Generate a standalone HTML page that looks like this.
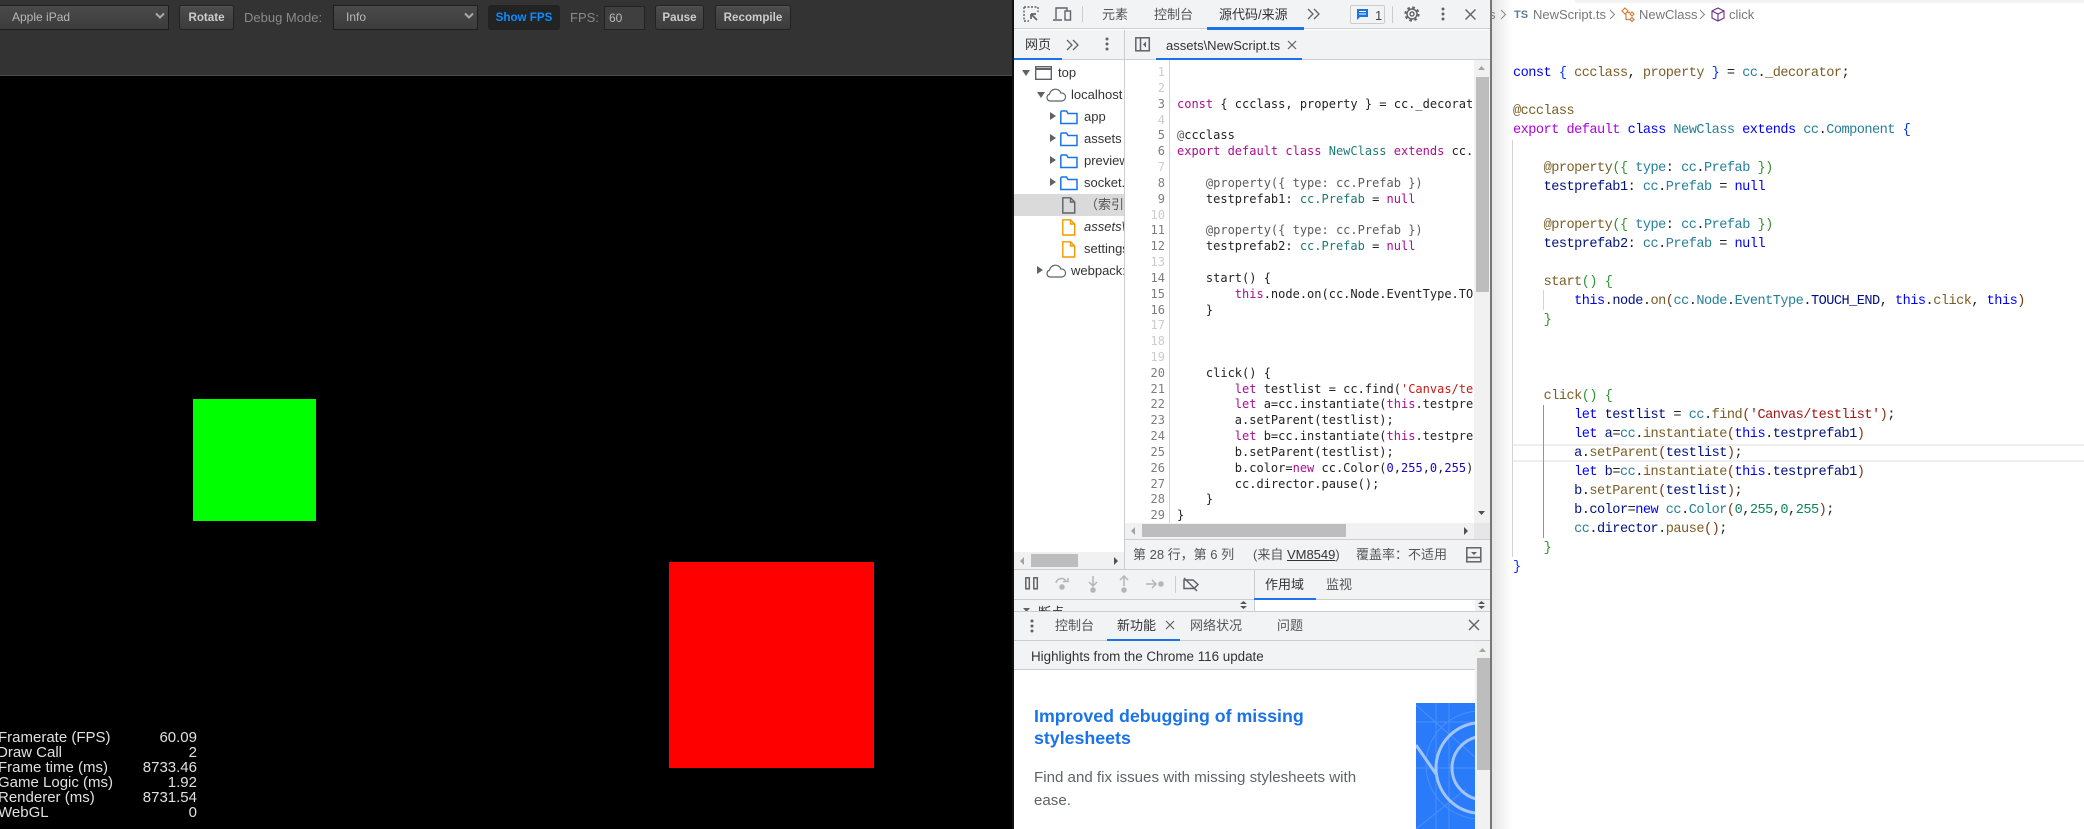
<!DOCTYPE html>
<html lang="zh"><head><meta charset="utf-8"><title>Debug</title>
<style>
*{box-sizing:border-box}
html,body{margin:0;padding:0;width:2084px;height:829px;overflow:hidden;background:#000}
body{font-family:"Liberation Sans","Noto Sans CJK SC",sans-serif;position:relative}
.a{position:absolute;white-space:pre}
.sel,.btn,.inp{position:absolute;top:5px;height:25px;font-size:12px;line-height:23px;color:#b8b8b8}
.sel{background:linear-gradient(#4a4a4a,#3c3c3c);border:1px solid #1e1e1e}
.btn{text-align:center;border:1px solid #222;border-radius:3px;background:linear-gradient(#4c4c4c,#3c3c3c);color:#ccc;font-weight:bold;font-size:11.6px;box-shadow:inset 0 1px 0 #565656}
.lbl{position:absolute;top:8px;font-size:13px;line-height:20px;color:#8a8a8a}
.st{position:absolute;font-size:15px;line-height:15px;color:#e0e0e0;filter:blur(.35px)}
.dt{position:absolute;font-size:13px;line-height:18px;color:#555;white-space:pre}
.tr{position:absolute;font-size:13px;line-height:18px;color:#333;white-space:pre;overflow:hidden}
.ln{position:absolute;left:1126px;width:39px;text-align:right;font:12px/16px "DejaVu Sans Mono",monospace;color:#7d7d7d;height:16px}
.ln.o{color:#ccc}
.c{position:absolute;left:1177px;width:297px;overflow:hidden;font:12px/16px "DejaVu Sans Mono",monospace;color:#222;white-space:pre;height:16px}
.k{color:#aa0d91}.t{color:#1c7a74}.n{color:#1c00cf}.s{color:#c41a16}.d{color:#5c5c5c}
.v{position:absolute;left:1513px;margin-top:1px;font:13.6px/19px "Liberation Mono",monospace;letter-spacing:-.52px;color:#222;white-space:pre}
.b{color:#0000ff}.p{color:#af00db}.g{color:#267f99}.f{color:#795e26}.x{color:#001080}.m{color:#098658}.r{color:#a31515}.h{color:#319331}.q{color:#0431fa}.y{color:#7b3814}
svg{position:absolute;overflow:visible}
</style></head><body>

<!-- Left: toolbar -->
<div class="a" style="left:0;top:0;width:1014px;height:75px;background:#333"></div>
<div class="a" style="left:0;top:75px;width:1014px;height:1px;background:#4a4a4a"></div>
<div class="sel" style="left:-4px;width:173px;padding-left:15px">Apple iPad</div>
<svg style="left:155px;top:12px" width="10" height="8"><path d="M1 1.5L5 5.5L9 1.5" fill="none" stroke="#aaa" stroke-width="2"/></svg>
<div class="btn" style="left:179px;width:55px">Rotate</div>
<div class="lbl" style="left:244px">Debug Mode:</div>
<div class="sel" style="left:333px;width:145px;padding-left:12px">Info</div>
<svg style="left:464px;top:12px" width="10" height="8"><path d="M1 1.5L5 5.5L9 1.5" fill="none" stroke="#aaa" stroke-width="2"/></svg>
<div class="btn" style="left:488px;width:72px;background:#232323;color:#0a8dff;box-shadow:none">Show FPS</div>
<div class="lbl" style="left:570px">FPS:</div>
<div class="inp" style="left:604px;width:41px;background:#3f3f3f;border:1px solid #222;padding-left:4px;top:6px;height:24px;line-height:22px">60</div>
<div class="btn" style="left:655px;width:49px">Pause</div>
<div class="btn" style="left:715px;width:76px">Recompile</div>

<!-- Canvas -->
<div class="a" style="left:193px;top:399px;width:123px;height:122px;background:#0f0"></div>
<div class="a" style="left:669px;top:562px;width:205px;height:206px;background:#f00"></div>
<div class="st" style="left:-2px;top:730px">Framerate (FPS)</div><div class="st" style="right:1887px;top:730px">60.09</div>
<div class="st" style="left:-3px;top:745px">Draw Call</div><div class="st" style="right:1887px;top:745px">2</div>
<div class="st" style="left:-2px;top:760px">Frame time (ms)</div><div class="st" style="right:1887px;top:760px">8733.46</div>
<div class="st" style="left:-2px;top:775px">Game Logic (ms)</div><div class="st" style="right:1887px;top:775px">1.92</div>
<div class="st" style="left:-2px;top:790px">Renderer (ms)</div><div class="st" style="right:1887px;top:790px">8731.54</div>
<div class="st" style="left:-2px;top:805px">WebGL</div><div class="st" style="right:1887px;top:805px">0</div>

<!-- DevTools -->
<div class="a" style="left:1012px;top:0;width:2px;height:829px;background:#111"></div>
<div class="a" style="left:1014px;top:0;width:477px;height:829px;background:#fff"></div>
<div class="a" style="left:1014px;top:0;width:477px;height:29px;background:#f1f3f4;border-bottom:1px solid #cacdd1"></div>
<svg style="left:1023px;top:6px" width="20" height="17" fill="none" stroke="#5f6368" stroke-width="1.4"><path d="M1 1h14M1 1v14M1 15h5M15 1v5" stroke-dasharray="2 1.5"/><path d="M8 8L14 14M8 8h5M8 8v5" stroke-width="1.7"/></svg>
<svg style="left:1053px;top:6px" width="20" height="16" fill="none" stroke="#5f6368" stroke-width="1.4"><path d="M3 13V2h11v3M0 14h9"/><rect x="12" y="5" width="5.5" height="9"/></svg>
<div class="a" style="left:1082px;top:6px;width:1px;height:16px;background:#ccc"></div>
<div class="dt" style="left:1102px;top:6px">元素</div>
<div class="dt" style="left:1154px;top:6px">控制台</div>
<div class="dt" style="left:1219px;top:6px;color:#333">源代码/来源</div>
<div class="a" style="left:1207px;top:27px;width:97px;height:3px;background:#1a73e8"></div>
<svg style="left:1307px;top:8px" width="14" height="12" fill="none" stroke="#5f6368" stroke-width="1.3"><path d="M1 1l5 5-5 5M7 1l5 5-5 5"/></svg>
<div class="a" style="left:1350px;top:5px;width:35px;height:19px;border:1px solid #ccc;border-radius:2px"></div>
<svg style="left:1357px;top:9px" width="13" height="11"><path d="M0 0h11v8H3L0 11z" fill="#1a73e8"/><path d="M2 2.5h7M2 5h7" stroke="#fff"/></svg>
<div class="dt" style="left:1375px;top:7px;color:#444">1</div>
<div class="a" style="left:1392px;top:6px;width:1px;height:17px;background:#ccc"></div>
<svg style="left:1404px;top:6px" width="16" height="16" fill="none" stroke="#5f6368"><circle cx="8" cy="8" r="5" stroke-width="1.4"/><circle cx="8" cy="8" r="2" stroke-width="1.4"/><circle cx="8" cy="8" r="6.6" stroke-width="2" stroke-dasharray="2.6 2.6"/></svg>
<svg style="left:1441px;top:7px" width="4" height="14" fill="#5f6368"><circle cx="2" cy="2" r="1.5"/><circle cx="2" cy="7" r="1.5"/><circle cx="2" cy="12" r="1.5"/></svg>
<svg style="left:1465px;top:9px" width="11" height="11" stroke="#5f6368" stroke-width="1.4"><path d="M.5.5l10 10M10.5.5l-10 10"/></svg>

<!-- row 2 -->
<div class="a" style="left:1014px;top:30px;width:477px;height:30px;background:#f1f3f4;border-bottom:1px solid #cacdd1"></div>
<div class="dt" style="left:1025px;top:36px;color:#333">网页</div>
<div class="a" style="left:1014px;top:58px;width:48px;height:2px;background:#1a73e8"></div>
<svg style="left:1066px;top:39px" width="14" height="12" fill="none" stroke="#5f6368" stroke-width="1.3"><path d="M1 1l5 5-5 5M7 1l5 5-5 5"/></svg>
<svg style="left:1105px;top:37px" width="4" height="14" fill="#5f6368"><circle cx="2" cy="2" r="1.5"/><circle cx="2" cy="7" r="1.5"/><circle cx="2" cy="12" r="1.5"/></svg>
<div class="a" style="left:1124px;top:30px;width:1px;height:539px;background:#cacdd1"></div>
<svg style="left:1135px;top:37px" width="16" height="15" fill="none" stroke="#5f6368" stroke-width="1.5"><rect x=".8" y=".8" width="13.5" height="13"/><path d="M5.5 1v13"/><path d="M11 4.5v6L8 7.5z" fill="#5f6368" stroke="none"/></svg>
<div class="dt" style="left:1166px;top:37px;color:#333">assets\NewScript.ts</div>
<svg style="left:1288px;top:41px" width="8" height="8" stroke="#5f6368" stroke-width="1.2"><path d="M0 0l8 8M8 0l-8 8"/></svg>
<div class="a" style="left:1156px;top:58px;width:146px;height:2px;background:#1a73e8"></div>

<!-- Tree -->
<div class="a" style="left:1014px;top:194px;width:110px;height:22px;background:#dadada"></div>
<svg style="left:1022px;top:70px" width="9" height="7"><path d="M0 0h8L4 6z" fill="#5f6368"/></svg>
<svg style="left:1035px;top:66px" width="18" height="15" fill="none" stroke="#5f6368" stroke-width="1.4"><rect x=".7" y=".7" width="15.6" height="12.6"/><path d="M1 3h15" stroke-width="2"/></svg>
<div class="tr" style="left:1058px;top:64px">top</div>
<svg style="left:1037px;top:92px" width="9" height="7"><path d="M0 0h8L4 6z" fill="#5f6368"/></svg>
<svg style="left:1046px;top:88px" width="21" height="14" fill="none" stroke="#5f6368" stroke-width="1.2"><path d="M5 13H4A3.5 3.5 0 0 1 3.5 6.2 6 6 0 0 1 15 5a4 4 0 0 1 1 8z"/></svg>
<div class="tr" style="left:1071px;top:86px;width:53px">localhost</div>

<svg style="left:1050px;top:112px" width="7" height="9"><path d="M0 0v8l6-4z" fill="#5f6368"/></svg>
<svg style="left:1060px;top:110px" width="19" height="15" fill="none" stroke="#1a73e8" stroke-width="1.5"><path d="M.8 2V13.5H17V3.5H8L6.5 1H1.5z"/></svg>
<div class="tr" style="left:1084px;top:108px">app</div>
<svg style="left:1050px;top:134px" width="7" height="9"><path d="M0 0v8l6-4z" fill="#5f6368"/></svg>
<svg style="left:1060px;top:132px" width="19" height="15" fill="none" stroke="#1a73e8" stroke-width="1.5"><path d="M.8 2V13.5H17V3.5H8L6.5 1H1.5z"/></svg>
<div class="tr" style="left:1084px;top:130px">assets</div>
<svg style="left:1050px;top:156px" width="7" height="9"><path d="M0 0v8l6-4z" fill="#5f6368"/></svg>
<svg style="left:1060px;top:154px" width="19" height="15" fill="none" stroke="#1a73e8" stroke-width="1.5"><path d="M.8 2V13.5H17V3.5H8L6.5 1H1.5z"/></svg>
<div class="tr" style="left:1084px;top:152px;width:40px">preview</div>
<svg style="left:1050px;top:178px" width="7" height="9"><path d="M0 0v8l6-4z" fill="#5f6368"/></svg>
<svg style="left:1060px;top:176px" width="19" height="15" fill="none" stroke="#1a73e8" stroke-width="1.5"><path d="M.8 2V13.5H17V3.5H8L6.5 1H1.5z"/></svg>
<div class="tr" style="left:1084px;top:174px;width:40px">socket.io</div>
<svg style="left:1062px;top:197px" width="14" height="17" fill="none" stroke="#5f6368" stroke-width="1.4"><path d="M.8.8H8.5L12.7 5V16H.8z"/><path d="M8.5 1v4h4"/></svg>
<div class="tr" style="left:1085px;top:196px;width:39px;color:#555">（索引）</div>
<svg style="left:1062px;top:219px" width="14" height="17" fill="none" stroke="#f29900" stroke-width="1.4"><path d="M.8.8H8.5L12.7 5V16H.8z"/><path d="M8.5 1v4h4"/></svg>
<div class="tr" style="left:1084px;top:218px;width:40px;font-style:italic">assets\NewScript.ts</div>
<svg style="left:1062px;top:241px" width="14" height="17" fill="none" stroke="#f29900" stroke-width="1.4"><path d="M.8.8H8.5L12.7 5V16H.8z"/><path d="M8.5 1v4h4"/></svg>
<div class="tr" style="left:1084px;top:240px;width:40px">settings.js</div>
<svg style="left:1037px;top:266px" width="7" height="9"><path d="M0 0v8l6-4z" fill="#5f6368"/></svg>
<svg style="left:1046px;top:264px" width="21" height="14" fill="none" stroke="#5f6368" stroke-width="1.2"><path d="M5 13H4A3.5 3.5 0 0 1 3.5 6.2 6 6 0 0 1 15 5a4 4 0 0 1 1 8z"/></svg>
<div class="tr" style="left:1071px;top:262px;width:53px">webpack://</div>

<div class="a" style="left:1014px;top:552px;width:110px;height:17px;background:#f1f1f1"></div>
<div class="a" style="left:1031px;top:554px;width:47px;height:13px;background:#bdbdbd"></div>
<svg style="left:1020px;top:557px" width="5" height="8"><path d="M4 0v8L0 4z" fill="#a3a3a3"/></svg>
<svg style="left:1114px;top:557px" width="5" height="8"><path d="M0 0v8l4-4z" fill="#505050"/></svg>

<!-- Source -->
<div class="a" style="left:1169px;top:60px;width:1px;height:463px;background:#d4d4d4"></div>
<div class="ln o" style="top:64px">1</div><div class="ln o" style="top:80px">2</div><div class="ln" style="top:96px">3</div><div class="ln o" style="top:112px">4</div><div class="ln" style="top:127px">5</div><div class="ln" style="top:143px">6</div><div class="ln o" style="top:159px">7</div><div class="ln" style="top:175px">8</div><div class="ln" style="top:191px">9</div><div class="ln o" style="top:207px">10</div><div class="ln" style="top:222px">11</div><div class="ln" style="top:238px">12</div><div class="ln o" style="top:254px">13</div><div class="ln" style="top:270px">14</div><div class="ln" style="top:286px">15</div><div class="ln" style="top:302px">16</div><div class="ln o" style="top:317px">17</div><div class="ln o" style="top:333px">18</div><div class="ln o" style="top:349px">19</div><div class="ln" style="top:365px">20</div><div class="ln" style="top:381px">21</div><div class="ln" style="top:396px">22</div><div class="ln" style="top:412px">23</div><div class="ln" style="top:428px">24</div><div class="ln" style="top:444px">25</div><div class="ln" style="top:460px">26</div><div class="ln" style="top:476px">27</div><div class="ln" style="top:491px">28</div><div class="ln" style="top:507px">29</div>

<div class="c" style="top:96px"><span class="k">const</span> { ccclass, property } = cc._decorator;</div>
<div class="c" style="top:127px"><span class="d">@</span>ccclass</div>
<div class="c" style="top:143px"><span class="k">export default class</span> <span class="t">NewClass</span> <span class="k">extends</span> cc.Component {</div>
<div class="c" style="top:175px">    <span class="d">@property({ type: cc.Prefab })</span></div>
<div class="c" style="top:191px">    testprefab1: <span class="t">cc.Prefab</span> = <span class="k">null</span></div>
<div class="c" style="top:222px">    <span class="d">@property({ type: cc.Prefab })</span></div>
<div class="c" style="top:238px">    testprefab2: <span class="t">cc.Prefab</span> = <span class="k">null</span></div>
<div class="c" style="top:270px">    start() {</div>
<div class="c" style="top:286px">        <span class="k">this</span>.node.on(cc.Node.EventType.TOUCH_END, <span class="k">this</span>.click, <span class="k">this</span>)</div>
<div class="c" style="top:302px">    }</div>
<div class="c" style="top:365px">    click() {</div>
<div class="c" style="top:381px">        <span class="k">let</span> testlist = cc.find(<span class="s">'Canvas/testlist'</span>);</div>
<div class="c" style="top:396px">        <span class="k">let</span> a=cc.instantiate(<span class="k">this</span>.testprefab1)</div>
<div class="c" style="top:412px">        a.setParent(testlist);</div>
<div class="c" style="top:428px">        <span class="k">let</span> b=cc.instantiate(<span class="k">this</span>.testprefab1)</div>
<div class="c" style="top:444px">        b.setParent(testlist);</div>
<div class="c" style="top:460px">        b.color=<span class="k">new</span> cc.Color(<span class="n">0</span>,<span class="n">255</span>,<span class="n">0</span>,<span class="n">255</span>);</div>
<div class="c" style="top:476px">        cc.director.pause();</div>
<div class="c" style="top:491px">    }</div>
<div class="c" style="top:507px">}</div>

<div class="a" style="left:1474px;top:60px;width:17px;height:463px;background:#f1f1f1"></div>
<div class="a" style="left:1476px;top:77px;width:13px;height:215px;background:#bdbdbd"></div>
<svg style="left:1478px;top:66px" width="8" height="5"><path d="M0 4h7L3.5 0z" fill="#a3a3a3"/></svg>
<svg style="left:1478px;top:511px" width="8" height="5"><path d="M0 0h7L3.5 4z" fill="#505050"/></svg>
<div class="a" style="left:1125px;top:523px;width:366px;height:16px;background:#f1f1f1"></div>
<div class="a" style="left:1142px;top:524px;width:204px;height:13px;background:#bdbdbd"></div>
<div class="a" style="left:1474px;top:523px;width:17px;height:16px;background:#e6e6e6"></div>
<svg style="left:1131px;top:527px" width="5" height="8"><path d="M4 0v8L0 4z" fill="#a3a3a3"/></svg>
<svg style="left:1464px;top:527px" width="5" height="8"><path d="M0 0v8l4-4z" fill="#505050"/></svg>

<!-- status -->
<div class="a" style="left:1125px;top:539px;width:366px;height:30px;background:#f1f3f4;border-top:1px solid #cacdd1"></div>
<div class="dt" style="left:1133px;top:546px">第 28 行，第 6 列</div>
<div class="dt" style="left:1253px;top:546px">(来自 <span style="text-decoration:underline;color:#333">VM8549</span>)</div>
<div class="dt" style="left:1356px;top:546px">覆盖率：不适用</div>
<svg style="left:1466px;top:547px" width="16" height="16" fill="none" stroke="#5f6368" stroke-width="1.5"><rect x=".8" y=".8" width="14" height="14"/><path d="M1 10.5h14"/><path d="M5 5h6L8 8z" fill="#5f6368" stroke="none"/></svg>

<!-- debugger -->
<div class="a" style="left:1014px;top:569px;width:477px;height:42px;background:#f1f3f4;border-top:1px solid #cacdd1"></div>
<div class="a" style="left:1014px;top:599px;width:477px;height:1px;background:#cacdd1"></div>
<div class="a" style="left:1254px;top:570px;width:1px;height:41px;background:#cacdd1"></div>
<svg style="left:1025px;top:577px" width="14" height="13" fill="none" stroke="#5f6368" stroke-width="1.5"><rect x=".8" y=".8" width="3.5" height="11"/><rect x="8.8" y=".8" width="3.5" height="11"/></svg>
<svg style="left:1055px;top:577px" width="16" height="14" fill="none" stroke="#b5b5b5" stroke-width="1.5"><path d="M1 6a5.5 5.5 0 0 1 10-2"/><path d="M8 4.5h5V1"/><circle cx="7" cy="10" r="2" fill="#b5b5b5"/></svg>
<svg style="left:1088px;top:576px" width="10" height="18" fill="none" stroke="#b5b5b5" stroke-width="1.5"><path d="M5 0v9M1 6l4 4 4-4"/><circle cx="5" cy="14" r="2" fill="#b5b5b5"/></svg>
<svg style="left:1119px;top:576px" width="10" height="18" fill="none" stroke="#b5b5b5" stroke-width="1.5"><path d="M5 10V1M1 4l4-4 4 4"/><circle cx="5" cy="14" r="2" fill="#b5b5b5"/></svg>
<svg style="left:1146px;top:579px" width="18" height="10" fill="none" stroke="#b5b5b5" stroke-width="1.5"><path d="M0 5h9M6 1l4 4-4 4"/><circle cx="15" cy="5" r="2" fill="#b5b5b5"/></svg>
<div class="a" style="left:1175px;top:576px;width:1px;height:17px;background:#ccc"></div>
<svg style="left:1182px;top:577px" width="18" height="15" fill="none" stroke="#5f6368" stroke-width="1.5"><path d="M2 3h9l5 4.5-4 4H2z"/><path d="M2 1l13 13"/></svg>
<div class="dt" style="left:1265px;top:576px;color:#333">作用域</div>
<div class="dt" style="left:1326px;top:576px">监视</div>
<div class="a" style="left:1254px;top:598px;width:62px;height:2px;background:#1a73e8"></div>
<div class="dt" style="left:1038px;top:604px;color:#333">断点</div>
<svg style="left:1023px;top:608px" width="8" height="5"><path d="M0 0h7L3.5 4z" fill="#5f6368"/></svg>
<div class="a" style="left:1255px;top:600px;width:236px;height:11px;background:#fff"></div>
<div class="a" style="left:1475px;top:600px;width:16px;height:11px;background:#f1f1f1"></div>
<svg style="left:1478px;top:601px" width="8" height="9" fill="#555"><path d="M0 3h7L3.500 0zM0 5h7L3.500 8z"/></svg>
<svg style="left:1240px;top:601px" width="8" height="9" fill="#555"><path d="M0 3h7L3.500 0zM0 5h7L3.500 8z"/></svg>

<!-- drawer -->
<div class="a" style="left:1014px;top:611px;width:477px;height:30px;background:#f1f3f4;border-top:1px solid #cacdd1;border-bottom:1px solid #cacdd1"></div>
<svg style="left:1030px;top:619px" width="4" height="14" fill="#5f6368"><circle cx="2" cy="2" r="1.5"/><circle cx="2" cy="7" r="1.5"/><circle cx="2" cy="12" r="1.5"/></svg>
<div class="dt" style="left:1055px;top:617px">控制台</div>
<div class="dt" style="left:1117px;top:617px;color:#333">新功能</div>
<svg style="left:1166px;top:621px" width="8" height="8" stroke="#5f6368" stroke-width="1.2"><path d="M0 0l8 8M8 0l-8 8"/></svg>
<div class="dt" style="left:1190px;top:617px">网络状况</div>
<div class="dt" style="left:1277px;top:617px">问题</div>
<svg style="left:1469px;top:620px" width="10" height="10" stroke="#5f6368" stroke-width="1.4"><path d="M0 0l10 10M10 0l-10 10"/></svg>
<div class="a" style="left:1107px;top:639px;width:73px;height:2px;background:#1a73e8"></div>
<div class="a" style="left:1014px;top:641px;width:461px;height:29px;background:#f1f3f4;border-bottom:1px solid #cacdd1"></div>
<div class="dt" style="left:1031px;top:647px;color:#333;font-size:13.4px;margin-top:1px">Highlights from the Chrome 116 update</div>
<div class="a" style="left:1034px;top:705px;font-size:17.8px;line-height:22px;font-weight:bold;color:#1a73e8">Improved debugging of missing
stylesheets</div>
<div class="a" style="left:1034px;top:767px;font-size:15.1px;line-height:22.5px;color:#5f6368">Find and fix issues with missing stylesheets with
ease.</div>

<svg style="left:1416px;top:703px;overflow:hidden" width="59" height="126">
<rect width="59" height="126" fill="#2a7bfa"/>
<g stroke="#4c8ffb" fill="none" stroke-width="1"><path d="M0 2L59 54M0 19h59M0 65h59M20 0v126M33 0v126M0 126L50 86"/><circle cx="64" cy="62" r="54"/></g>
<g stroke="#a3c5fd" fill="none" stroke-width="3"><path d="M0 42L20 71"/><circle cx="65.500" cy="65" r="45.500"/><circle cx="67.700" cy="65" r="31.700"/></g>
</svg>
<div class="a" style="left:1475px;top:641px;width:16px;height:188px;background:#f1f1f1"></div>
<div class="a" style="left:1477px;top:658px;width:13px;height:112px;background:#bdbdbd"></div>
<svg style="left:1479px;top:648px" width="8" height="5"><path d="M0 4h7L3.5 0z" fill="#a3a3a3"/></svg>

<!-- VS Code -->
<div class="a" style="left:1491px;top:0;width:593px;height:829px;background:#fff"></div>
<div class="a" style="left:1490px;top:0;width:2px;height:829px;background:#777"></div>
<div class="a" style="left:1492px;top:0;width:20px;height:829px;background:linear-gradient(90deg,#e6e6e6,#fff)"></div>
<div class="a" style="left:1575px;top:0;width:509px;height:3px;background:#f3f3f3"></div>

<div class="a" style="left:1492px;top:6px;font-size:13px;line-height:18px;color:#777;width:3px;overflow:hidden;text-indent:-3px">s</div>
<svg style="left:1500px;top:9px" width="7" height="11" fill="none" stroke="#888"><path d="M1 1l4.500 4.500L1 10"/></svg>
<div class="a" style="left:1514px;top:8px;font-size:11px;line-height:14px;font-weight:bold;color:#5c7c9c">TS</div>
<div class="a" style="left:1533px;top:6px;font-size:13px;line-height:18px;color:#777">NewScript.ts</div>
<svg style="left:1609px;top:9px" width="7" height="11" fill="none" stroke="#888"><path d="M1 1l4.500 4.500L1 10"/></svg>
<svg style="left:1621px;top:7px" width="14" height="15" fill="none" stroke="#d67e3c" stroke-width="1.2"><path d="M4 1L1 4l3 3 3-3zM11 5l-2 2 2 2 2-2zM11 10.500l-2 2 2 2 2-2zM5 6l0 6.500h4M6.500 5.500H9"/></svg>
<div class="a" style="left:1639px;top:6px;font-size:13px;line-height:18px;color:#777">NewClass</div>
<svg style="left:1699px;top:9px" width="7" height="11" fill="none" stroke="#888"><path d="M1 1l4.500 4.500L1 10"/></svg>
<svg style="left:1711px;top:7px" width="14" height="15" fill="none" stroke="#652d90" stroke-width="1.1"><path d="M7 1l6 3v7l-6 3-6-3V4zM1 4l6 3 6-3M7 7v7"/></svg>
<div class="a" style="left:1729px;top:6px;font-size:13px;line-height:18px;color:#777">click</div>

<!-- guides -->
<div class="a" style="left:1512px;top:140px;width:1px;height:417px;background:#d3d3d3"></div>
<div class="a" style="left:1543px;top:290px;width:1px;height:20px;background:#d3d3d3"></div>
<div class="a" style="left:1513px;top:444px;width:571px;height:18px;border-top:2px solid #eee;border-bottom:2px solid #eee"></div>
<div class="a" style="left:1543px;top:405px;width:1px;height:133px;background:#939393"></div>

<div class="v" style="top:63px"><span class="b">const</span> <span class="q">{</span> <span class="f">ccclass</span>, <span class="f">property</span> <span class="q">}</span> = <span class="g">cc</span>.<span class="f">_decorator</span>;</div>
<div class="v" style="top:101px"><span class="f">@ccclass</span></div>
<div class="v" style="top:120px"><span class="p">export default</span> <span class="b">class</span> <span class="g">NewClass</span> <span class="b">extends</span> <span class="g">cc</span>.<span class="g">Component</span> <span class="q">{</span></div>
<div class="v" style="top:158px">    <span class="f">@property</span><span class="h">({</span> <span class="g">type</span>: <span class="g">cc</span>.<span class="g">Prefab</span> <span class="h">})</span></div>
<div class="v" style="top:177px">    <span class="x">testprefab1</span>: <span class="g">cc</span>.<span class="g">Prefab</span> = <span class="b">null</span></div>
<div class="v" style="top:215px">    <span class="f">@property</span><span class="h">({</span> <span class="g">type</span>: <span class="g">cc</span>.<span class="g">Prefab</span> <span class="h">})</span></div>
<div class="v" style="top:234px">    <span class="x">testprefab2</span>: <span class="g">cc</span>.<span class="g">Prefab</span> = <span class="b">null</span></div>
<div class="v" style="top:272px">    <span class="f">start</span><span class="h">()</span> <span class="h">{</span></div>
<div class="v" style="top:291px">        <span class="b">this</span>.<span class="x">node</span>.<span class="f">on</span><span class="y">(</span><span class="g">cc</span>.<span class="g">Node</span>.<span class="g">EventType</span>.<span class="x">TOUCH_END</span>, <span class="b">this</span>.<span class="f">click</span>, <span class="b">this</span><span class="y">)</span></div>
<div class="v" style="top:310px">    <span class="h">}</span></div>
<div class="v" style="top:386px">    <span class="f">click</span><span class="h">()</span> <span class="h">{</span></div>
<div class="v" style="top:405px">        <span class="b">let</span> <span class="x">testlist</span> = <span class="g">cc</span>.<span class="f">find</span><span class="y">(</span><span class="r">'Canvas/testlist'</span><span class="y">)</span>;</div>
<div class="v" style="top:424px">        <span class="b">let</span> <span class="x">a</span>=<span class="g">cc</span>.<span class="f">instantiate</span><span class="y">(</span><span class="b">this</span>.<span class="x">testprefab1</span><span class="y">)</span></div>
<div class="v" style="top:443px">        <span class="x">a</span>.<span class="f">setParent</span><span class="y">(</span><span class="x">testlist</span><span class="y">)</span>;</div>
<div class="v" style="top:462px">        <span class="b">let</span> <span class="x">b</span>=<span class="g">cc</span>.<span class="f">instantiate</span><span class="y">(</span><span class="b">this</span>.<span class="x">testprefab1</span><span class="y">)</span></div>
<div class="v" style="top:481px">        <span class="x">b</span>.<span class="f">setParent</span><span class="y">(</span><span class="x">testlist</span><span class="y">)</span>;</div>
<div class="v" style="top:500px">        <span class="x">b</span>.<span class="x">color</span>=<span class="b">new</span> <span class="g">cc</span>.<span class="g">Color</span><span class="y">(</span><span class="m">0</span>,<span class="m">255</span>,<span class="m">0</span>,<span class="m">255</span><span class="y">)</span>;</div>
<div class="v" style="top:519px">        <span class="g">cc</span>.<span class="x">director</span>.<span class="f">pause</span><span class="y">()</span>;</div>
<div class="v" style="top:538px">    <span class="h">}</span></div>
<div class="v" style="top:557px"><span class="q">}</span></div>
</body></html>
